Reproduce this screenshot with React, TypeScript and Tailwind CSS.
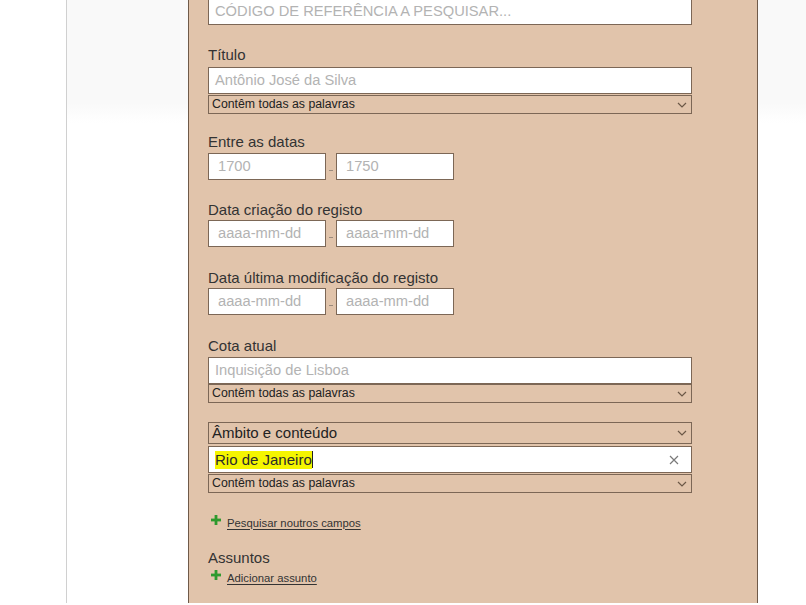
import React from "react";

const Chevron = () => (
  <svg width="10" height="6" viewBox="0 0 10 6" className="shrink-0">
    <polyline points="1,1 5,5 9,1" fill="none" stroke="#6b5847" strokeWidth="1.2" />
  </svg>
);

const Plus = () => (
  <svg width="10" height="10" viewBox="0 0 10 10" className="shrink-0">
    <rect x="3.6" y="0" width="2.8" height="10" fill="#2e9a2e" />
    <rect x="0" y="3.6" width="10" height="2.8" fill="#2e9a2e" />
  </svg>
);

const Label = ({ children, className = "" }: { children: React.ReactNode; className?: string }) => (
  <div className={`h-[18px] text-[15px] leading-[18px] text-[#333] ${className}`}>{children}</div>
);

const TextBox = ({ placeholder, className = "" }: { placeholder: string; className?: string }) => (
  <div
    className={`flex h-[27px] items-center border border-[#7c6756] bg-white px-[6px] text-[14.7px] text-[#b3b3b3] ${className}`}
  >
    {placeholder}
  </div>
);

const Select = ({ text, className = "", big = false }: { text: string; className?: string; big?: boolean }) => (
  <div
    className={`flex items-center justify-between border border-[#7c6756] pl-[3px] pr-[4px] text-[#222] ${
      big ? "h-[22px] text-[15px]" : "h-[19px] text-[12.3px]"
    } ${className}`}
  >
    <span>{text}</span>
    <Chevron />
  </div>
);

const DateRange = ({ a, b, className = "" }: { a: string; b: string; className?: string }) => (
  <div className={`flex items-center ${className}`}>
    <TextBox placeholder={a} className="w-[118px] px-[9px]" />
    <span className="flex w-[10px] justify-center">
      <span className="mt-[8px] h-px w-[4px] bg-[#9a8a7c]" />
    </span>
    <TextBox placeholder={b} className="w-[118px] px-[9px]" />
  </div>
);

const LinkRow = ({ text, className = "" }: { text: string; className?: string }) => (
  <div className={`flex h-[16px] items-center gap-[6px] pl-[3px] ${className}`}>
    <span className="-mt-[6px]">
      <Plus />
    </span>
    <span className="text-[11.3px] text-[#333] underline underline-offset-2">{text}</span>
  </div>
);

export default function App() {
  return (
    <div className="h-[605px] w-[806px] overflow-hidden bg-white font-['Liberation_Sans',Arial,sans-serif]">
      <div className="ml-[66px] h-full border-l border-[#d0d0d0] bg-[linear-gradient(to_bottom,#f9f9f9_0px,#f9f9f9_105px,#ffffff_125px)]">
        <div className="ml-[121px] h-full w-[570px] border-x border-[#6f5a49] bg-[#e1c4ab] pl-[19px]">
          <div className="w-[484px]">
            {/* Código de referência */}
            <TextBox placeholder="CÓDIGO DE REFERÊNCIA A PESQUISAR..." className="-mt-[2px]" />

            {/* Título */}
            <Label className="mt-[21px]">Título</Label>
            <TextBox placeholder="Antônio José da Silva" className="mt-[3px]" />
            <Select text="Contêm todas as palavras" className="mt-[1px]" />

            {/* Datas */}
            <Label className="mt-[19px]">Entre as datas</Label>
            <DateRange a="1700" b="1750" className="mt-[2px]" />

            <Label className="mt-[21px]">Data criação do registo</Label>
            <DateRange a="aaaa-mm-dd" b="aaaa-mm-dd" className="mt-[1px]" />

            <Label className="mt-[22px]">Data última modificação do registo</Label>
            <DateRange a="aaaa-mm-dd" b="aaaa-mm-dd" className="mt-[1px]" />

            {/* Cota */}
            <Label className="mt-[22px]">Cota atual</Label>
            <TextBox placeholder="Inquisição de Lisboa" className="mt-[2px]" />
            <Select text="Contêm todas as palavras" />

            {/* Âmbito */}
            <Select big text="Âmbito e conteúdo" className="mt-[19px]" />
            <div className="mt-[2px] flex h-[27px] items-center justify-between border border-[#7c6756] bg-white pl-[6px] pr-[12px] text-[15px] text-[#2b2b2b]">
              <span className="flex items-center">
                <span className="bg-[#f5f500] leading-[18px]">Rio de Janeiro</span>
                <span className="h-[17px] w-px bg-[#222]" />
              </span>
              <svg width="10" height="10" viewBox="0 0 10 10">
                <path d="M1 1 L9 9 M9 1 L1 9" stroke="#7a7a7a" strokeWidth="1.2" />
              </svg>
            </div>
            <Select text="Contêm todas as palavras" className="mt-[1px]" />

            <LinkRow text="Pesquisar noutros campos" className="mt-[22px]" />

            <Label className="mt-[18px]">Assuntos</Label>
            <LinkRow text="Adicionar assunto" className="mt-[3px]" />
          </div>
        </div>
      </div>
    </div>
  );
}
